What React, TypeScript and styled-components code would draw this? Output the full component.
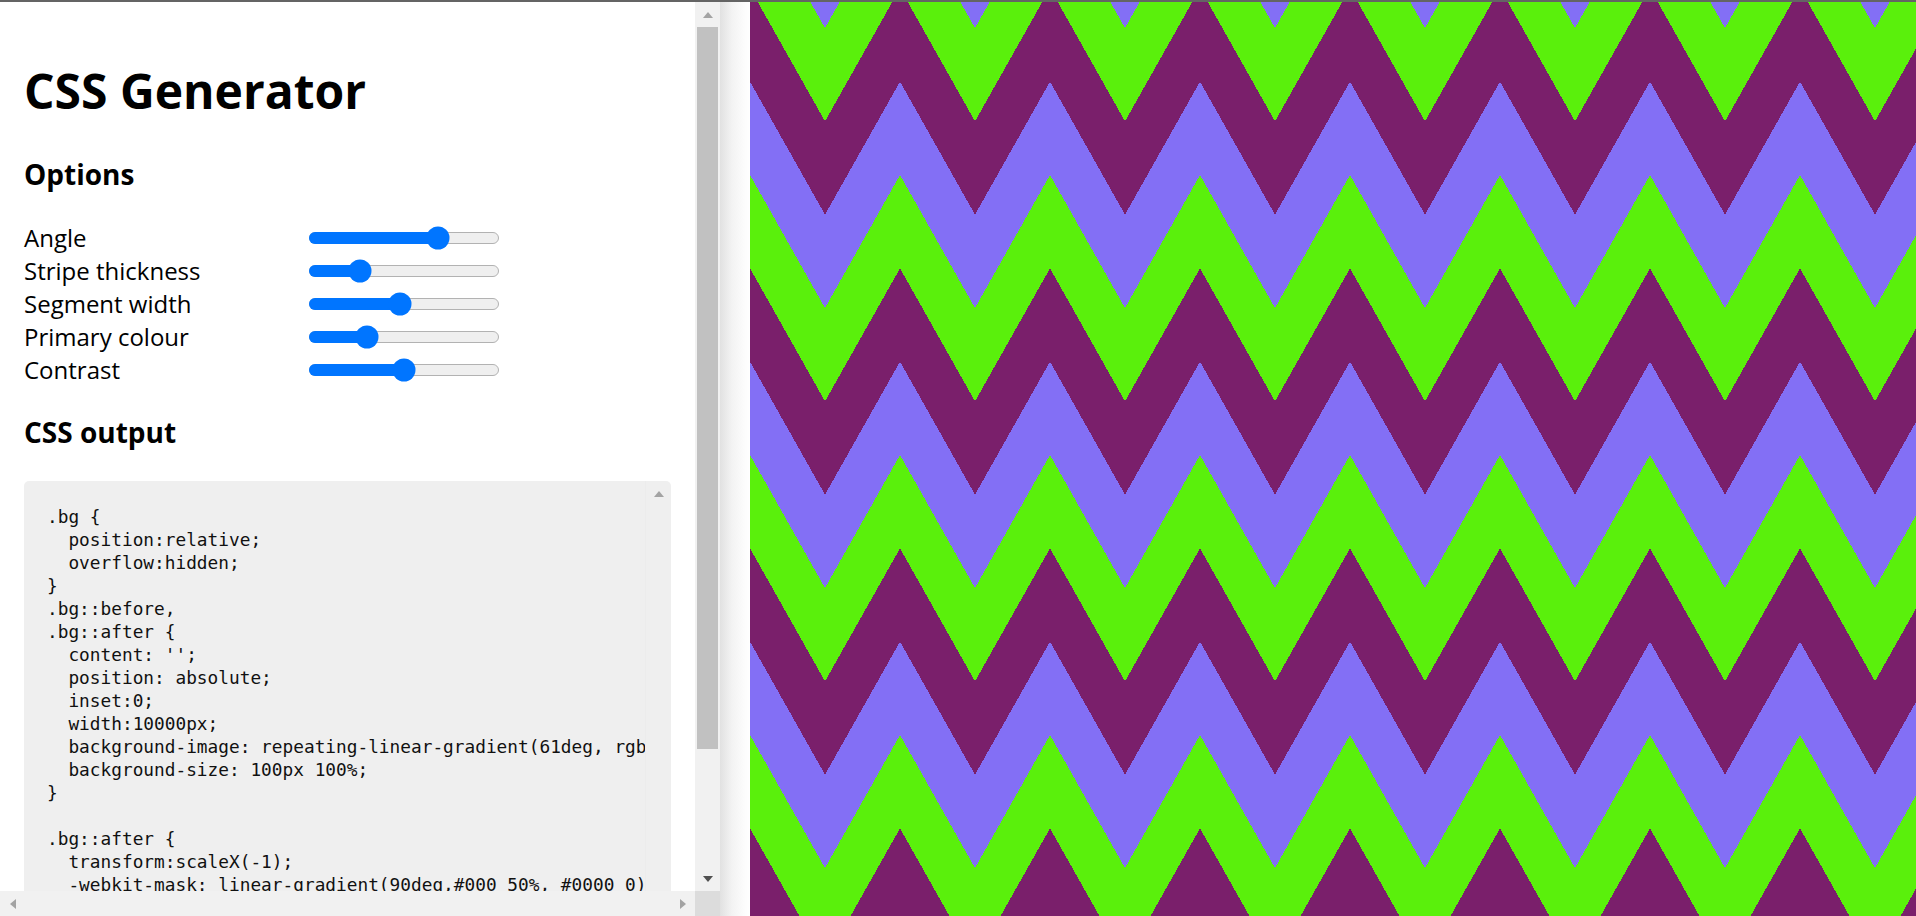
import React from "react";
import styled, { createGlobalStyle, css } from "styled-components";

const GlobalStyle = createGlobalStyle`
  html, body { margin: 0; padding: 0; background: #fff; overflow: hidden; }
  body { font-family: "Open Sans", "Noto Sans", Arial, sans-serif; color: #000; }
  * { box-sizing: border-box; }
`;

const COLORS = { lavender: "#836ff5", green: "#5af00c", magenta: "#7a1f6b" };

const Window = styled.div`
  display: flex;
  flex-direction: column;
  width: 100vw;
  height: 100vh;
`;

const TopEdge = styled.div`
  height: 2px;
  flex: none;
  background: #646464;
`;

const Main = styled.div`
  flex: 1;
  display: flex;
  min-height: 0;
`;

const Sidebar = styled.aside`
  width: 720px;
  flex: none;
  display: flex;
  flex-direction: column;
  background: #fff;
`;

const SidebarBody = styled.div`
  flex: 1;
  display: flex;
  min-height: 0;
`;

const Content = styled.div`
  width: 695px;
  flex: none;
  overflow: hidden;
  padding: 56px 24px 0 24px;
`;

const Title = styled.h1`
  margin: 0;
  font-size: 48px;
  line-height: 65px;
  font-weight: 700;
`;

const SectionTitle = styled.h2<{ $gap: number }>`
  margin: ${(p) => p.$gap}px 0 0 0;
  font-size: 28px;
  line-height: 38px;
  font-weight: 700;
`;

const Options = styled.div`
  margin-top: 28px;
  display: grid;
  grid-template-columns: 285px 190px;
  grid-auto-rows: 33px;
  align-items: center;
`;

const Label = styled.label`
  font-size: 24px;
  line-height: 33px;
`;

const Track = styled.div`
  position: relative;
  width: 190px;
  height: 12px;
  border: 1px solid #b2b2b2;
  border-radius: 6px;
  background: #efefef;
`;

const Fill = styled.div`
  position: absolute;
  left: -1px;
  top: -1px;
  height: 12px;
  border-radius: 6px 0 0 6px;
  background: #0075ff;
`;

const Thumb = styled.div`
  position: absolute;
  top: 50%;
  width: 23px;
  height: 23px;
  border-radius: 50%;
  background: #0075ff;
  transform: translate(-50%, -50%);
`;

const CodeBox = styled.div`
  margin-top: 30px;
  height: 520px;
  display: flex;
  background: #efefef;
  border-radius: 5px;
`;

const Code = styled.pre`
  flex: 1;
  margin: 0;
  padding: 24px 0 0 23px;
  overflow: hidden;
  white-space: pre;
  font-family: "DejaVu Sans Mono", "Liberation Mono", monospace;
  font-size: 17.8px;
  line-height: 23px;
  color: #111;
`;

const CodeScroll = styled.div`
  width: 26px;
  flex: none;
  display: flex;
  flex-direction: column;
  border-left: 1px solid #ececec;
`;

const ScrollButton = styled.div<{ $size: number }>`
  width: ${(p) => p.$size}px;
  height: ${(p) => p.$size}px;
  flex: none;
  display: flex;
  align-items: center;
  justify-content: center;
`;

type Dir = "up" | "down" | "left" | "right";

const Arrow = styled.span<{ $dir: Dir; $color: string }>`
  display: block;
  width: 0;
  height: 0;
  ${(p) =>
    p.$dir === "up" &&
    css`
      border-left: 5.5px solid transparent;
      border-right: 5.5px solid transparent;
      border-bottom: 6px solid ${p.$color};
    `}
  ${(p) =>
    p.$dir === "down" &&
    css`
      border-left: 5.5px solid transparent;
      border-right: 5.5px solid transparent;
      border-top: 6px solid ${p.$color};
    `}
  ${(p) =>
    p.$dir === "left" &&
    css`
      border-top: 5px solid transparent;
      border-bottom: 5px solid transparent;
      border-right: 6px solid ${p.$color};
    `}
  ${(p) =>
    p.$dir === "right" &&
    css`
      border-top: 5px solid transparent;
      border-bottom: 5px solid transparent;
      border-left: 6px solid ${p.$color};
    `}
`;

const VScroll = styled.div`
  width: 25px;
  flex: none;
  display: flex;
  flex-direction: column;
  background: #f1f1f1;
`;

const VThumb = styled.div`
  height: 722px;
  margin: 0 2px;
  background: #c1c1c1;
  flex: none;
`;

const Spacer = styled.div`
  flex: 1;
`;

const SidebarFooter = styled.div`
  height: 25px;
  flex: none;
  display: flex;
`;

const HScroll = styled.div`
  width: 695px;
  display: flex;
  background: #f1f1f1;
`;

const Corner = styled.div`
  width: 25px;
  background: #dcdcdc;
`;

const Gutter = styled.div`
  width: 30px;
  flex: none;
  background: linear-gradient(to right, #e1e1e1 0, #f3f3f3 12px, #fcfcfc 24px, #fff 30px);
`;

const Canvas = styled.main`
  flex: 1;
  overflow: hidden;
  background: ${COLORS.magenta};
  svg {
    display: block;
  }
`;

const options = [
  { label: "Angle", value: 0.704 },
  { label: "Stripe thickness", value: 0.237 },
  { label: "Segment width", value: 0.476 },
  { label: "Primary colour", value: 0.28 },
  { label: "Contrast", value: 0.502 },
];

const cssOutput = `.bg {
  position:relative;
  overflow:hidden;
}
.bg::before,
.bg::after {
  content: '';
  position: absolute;
  inset:0;
  width:10000px;
  background-image: repeating-linear-gradient(61deg, rgb(122, 31, 107) 0 40px, rgb(131, 111, 245) 0 80px, rgb(90, 240, 12) 0 120px);
  background-size: 100px 100%;
}

.bg::after {
  transform:scaleX(-1);
  -webkit-mask: linear-gradient(90deg,#000 50%, #0000 0);
}`;

function Slider({ value }: { value: number }) {
  const center = 11.5 + value * (190 - 23);
  return (
    <Track role="slider" aria-valuenow={Math.round(value * 100)}>
      <Fill style={{ width: center + 1 }} />
      <Thumb style={{ left: center - 1 }} />
    </Track>
  );
}

function Zigzag() {
  const A = 133;
  const T = 280 / 3;
  const b0 = 79.67;
  const palette = [COLORS.lavender, COLORS.green, COLORS.magenta];
  const bands: React.ReactNode[] = [];
  for (let k = -4; k <= 3; k++) {
    const b = b0 + T * k;
    const c = palette[((k % 3) + 3) % 3];
    const pts = `0,${b} 75,${b + A} 150,${b} 150,${b + T} 75,${b + A + T} 0,${b + T}`;
    bands.push(<polygon key={k} points={pts} fill={c} shapeRendering="crispEdges" />);
  }
  return (
    <svg width="100%" height="100%">
      <defs>
        <pattern id="zigzag" width="150" height="280" patternUnits="userSpaceOnUse">
          <rect width="150" height="280" fill={COLORS.magenta} />
          {bands}
        </pattern>
      </defs>
      <rect width="100%" height="100%" fill="url(#zigzag)" />
    </svg>
  );
}

export default function App() {
  return (
    <>
      <GlobalStyle />
      <Window>
        <TopEdge />
        <Main>
          <Sidebar>
            <SidebarBody>
              <Content>
                <Title>CSS Generator</Title>
                <SectionTitle $gap={32}>Options</SectionTitle>
                <Options>
                  {options.map((o) => (
                    <React.Fragment key={o.label}>
                      <Label>{o.label}</Label>
                      <Slider value={o.value} />
                    </React.Fragment>
                  ))}
                </Options>
                <SectionTitle $gap={27}>CSS output</SectionTitle>
                <CodeBox>
                  <Code>{cssOutput}</Code>
                  <CodeScroll>
                    <ScrollButton $size={26}>
                      <Arrow $dir="up" $color="#a3a3a3" />
                    </ScrollButton>
                  </CodeScroll>
                </CodeBox>
              </Content>
              <VScroll>
                <ScrollButton $size={25}>
                  <Arrow $dir="up" $color="#a3a3a3" />
                </ScrollButton>
                <VThumb />
                <Spacer />
                <ScrollButton $size={25}>
                  <Arrow $dir="down" $color="#505050" />
                </ScrollButton>
              </VScroll>
            </SidebarBody>
            <SidebarFooter>
              <HScroll>
                <ScrollButton $size={25}>
                  <Arrow $dir="left" $color="#a3a3a3" />
                </ScrollButton>
                <Spacer />
                <ScrollButton $size={25}>
                  <Arrow $dir="right" $color="#a3a3a3" />
                </ScrollButton>
              </HScroll>
              <Corner />
            </SidebarFooter>
          </Sidebar>
          <Gutter />
          <Canvas>
            <Zigzag />
          </Canvas>
        </Main>
      </Window>
    </>
  );
}
